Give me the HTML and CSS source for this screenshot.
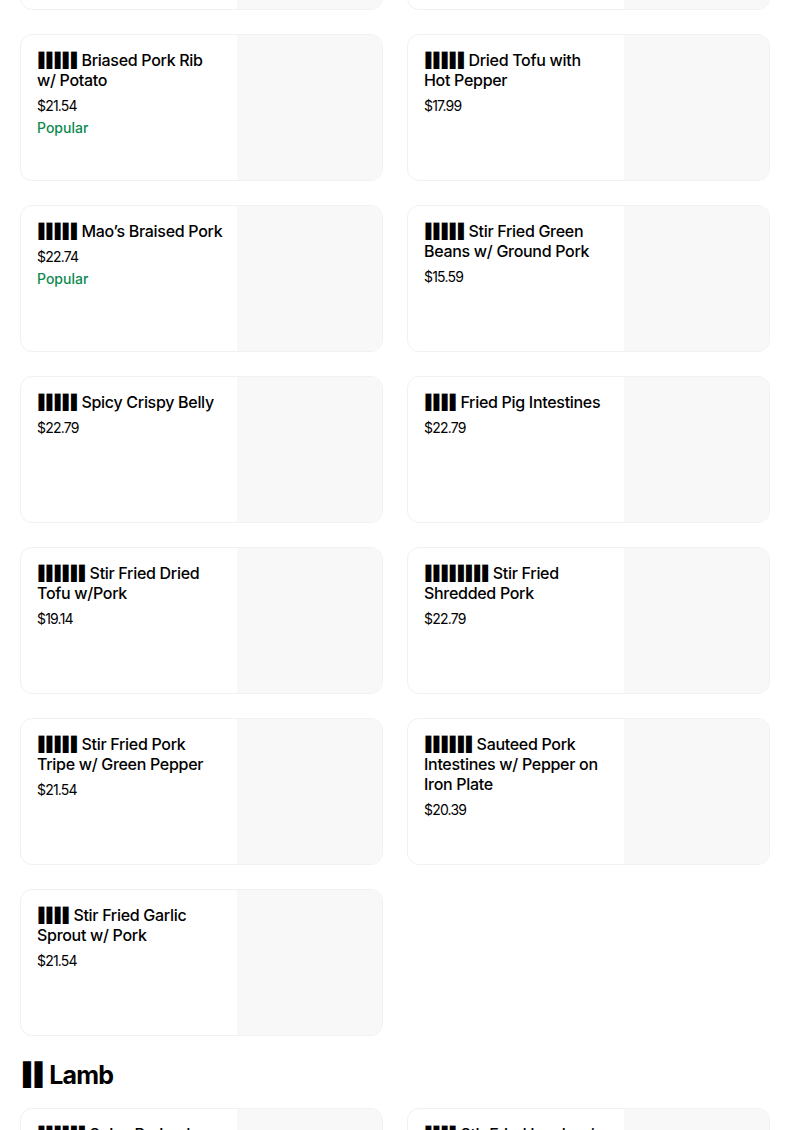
FILE: index.html
```html
<!DOCTYPE html>
<html lang="en">
<head>
<meta charset="utf-8">
<title>Menu</title>
<link rel="stylesheet" href="styles.css">
</head>
<body>
<main class="page">
  <section class="grid grid-first">
    <div class="card"><div class="info"></div><div class="thumb"></div></div>
    <div class="card"><div class="info"></div><div class="thumb"></div></div>

    <div class="card"><div class="info">
      <h3 class="title"><span class="tofu">▮▮▮▮▮</span> Briased Pork Rib<br>w/ Potato</h3>
      <p class="price">$21.54</p>
      <p class="tag">Popular</p>
    </div><div class="thumb"></div></div>
    <div class="card"><div class="info">
      <h3 class="title"><span class="tofu">▮▮▮▮▮</span> Dried Tofu with<br>Hot Pepper</h3>
      <p class="price">$17.99</p>
    </div><div class="thumb"></div></div>

    <div class="card"><div class="info">
      <h3 class="title"><span class="tofu">▮▮▮▮▮</span> Mao’s Braised Pork</h3>
      <p class="price">$22.74</p>
      <p class="tag">Popular</p>
    </div><div class="thumb"></div></div>
    <div class="card"><div class="info">
      <h3 class="title"><span class="tofu">▮▮▮▮▮</span> Stir Fried Green<br>Beans w/ Ground Pork</h3>
      <p class="price">$15.59</p>
    </div><div class="thumb"></div></div>

    <div class="card"><div class="info">
      <h3 class="title"><span class="tofu">▮▮▮▮▮</span> Spicy Crispy Belly</h3>
      <p class="price">$22.79</p>
    </div><div class="thumb"></div></div>
    <div class="card"><div class="info">
      <h3 class="title"><span class="tofu">▮▮▮▮</span> Fried Pig Intestines</h3>
      <p class="price">$22.79</p>
    </div><div class="thumb"></div></div>

    <div class="card"><div class="info">
      <h3 class="title"><span class="tofu">▮▮▮▮▮▮</span> Stir Fried Dried<br>Tofu w/Pork</h3>
      <p class="price">$19.14</p>
    </div><div class="thumb"></div></div>
    <div class="card"><div class="info">
      <h3 class="title"><span class="tofu">▮▮▮▮▮▮▮▮</span> Stir Fried<br>Shredded Pork</h3>
      <p class="price">$22.79</p>
    </div><div class="thumb"></div></div>

    <div class="card"><div class="info">
      <h3 class="title"><span class="tofu">▮▮▮▮▮</span> Stir Fried Pork<br>Tripe w/ Green Pepper</h3>
      <p class="price">$21.54</p>
    </div><div class="thumb"></div></div>
    <div class="card"><div class="info">
      <h3 class="title"><span class="tofu">▮▮▮▮▮▮</span> Sauteed Pork<br>Intestines w/ Pepper on<br>Iron Plate</h3>
      <p class="price">$20.39</p>
    </div><div class="thumb"></div></div>

    <div class="card"><div class="info">
      <h3 class="title"><span class="tofu">▮▮▮▮</span> Stir Fried Garlic<br>Sprout w/ Pork</h3>
      <p class="price">$21.54</p>
    </div><div class="thumb"></div></div>
  </section>

  <h2 class="section-title"><span class="tofu-lg">▮▮</span> Lamb</h2>

  <section class="grid">
    <div class="card"><div class="info">
      <h3 class="title"><span class="tofu">▮▮▮▮▮▮</span> Spicy Braised<br>Lamb</h3>
      <p class="price">$24.79</p>
    </div><div class="thumb"></div></div>
    <div class="card"><div class="info">
      <h3 class="title"><span class="tofu">▮▮▮▮</span> Stir Fried Lamb w/<br>Cumin</h3>
      <p class="price">$23.54</p>
    </div><div class="thumb"></div></div>
  </section>
</main>
</body>
</html>
```

FILE: styles.css
```css
html, body {
  margin: 0;
  padding: 0;
  background: #ffffff;
}
body {
  font-family: Inter, "Liberation Sans", sans-serif;
  color: #000000;
  overflow: hidden;
}
.page {
  width: 750px;
  padding-left: 20px;
}
.grid {
  display: grid;
  grid-template-columns: 363px 363px;
  column-gap: 24px;
  row-gap: 24px;
}
.grid-first {
  margin-top: -137px;
}
.card {
  height: 147px;
  box-sizing: border-box;
  border: 1px solid #f1f1f1;
  border-radius: 12px;
  display: flex;
  overflow: hidden;
  background: #ffffff;
}
.info {
  flex: 1;
  min-width: 0;
  padding: 15px 16px 0 16px;
}
.thumb {
  width: 145px;
  flex: none;
  background: #f8f8f8;
}
.title {
  margin: 0;
  font-size: 16px;
  line-height: 20px;
  font-weight: 500;
  letter-spacing: -0.3px;
  white-space: nowrap;
}
.tofu {
  display: inline-block;
  font-family: "DejaVu Sans", sans-serif;
  font-size: 16px;
  line-height: 16px;
  letter-spacing: -0.7px;
  transform: scaleY(1.42);
  transform-origin: 0 13.5px;
}
.price {
  margin: 6px 0 0 0;
  font-size: 14px;
  line-height: 20px;
  font-weight: 400;
  letter-spacing: -0.8px;
}
.tag {
  margin: 2px 0 0 0;
  font-size: 14px;
  line-height: 20px;
  font-weight: 500;
  color: #0e8a4f;
}
.section-title {
  margin: 23px 0 17px 1px;
  font-size: 25px;
  line-height: 32px;
  font-weight: 700;
  letter-spacing: -0.8px;
}
.tofu-lg {
  display: inline-block;
  font-family: "DejaVu Sans", sans-serif;
  font-size: 22px;
  line-height: 22px;
  letter-spacing: -0.6px;
  transform: scaleY(1.6);
  transform-origin: 0 18.5px;
}
```
